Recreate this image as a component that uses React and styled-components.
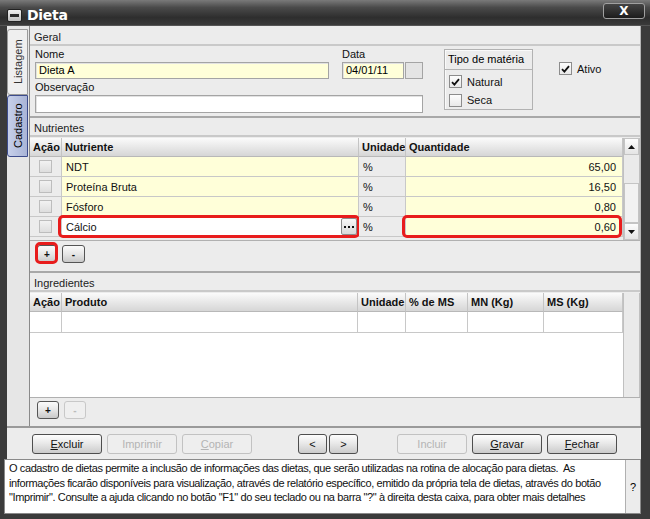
import React from "react";
import styled, { createGlobalStyle, css } from "styled-components";

const GlobalStyle = createGlobalStyle`
  html, body { margin: 0; padding: 0; background: #fff; }
  body { font-family: "Liberation Sans", Arial, sans-serif; font-size: 11px; color: #000; }
  * { box-sizing: border-box; }
`;

const Window = styled.div`
  width: 650px;
  height: 519px;
  background: #3b3b3b;
  display: flex;
  flex-direction: column;
  overflow: hidden;
`;

const TitleBar = styled.div`
  height: 26px;
  display: flex;
  align-items: center;
  padding: 5px 5px 0 7px;
  background: linear-gradient(#7a7a7a 0%, #4a4a4a 30%, #2e2e2e 70%, #3a3a3a 100%);
  border-bottom: 1px solid #555;
`;

const MinIcon = styled.div`
  width: 15px;
  height: 13px;
  border-radius: 2px;
  background: linear-gradient(#f0f0f0, #bdbdbd);
  border: 1px solid #222;
  display: flex;
  align-items: center;
  justify-content: center;
  &::after {
    content: "";
    width: 9px;
    height: 3px;
    background: #2a2a2a;
  }
`;

const Title = styled.div`
  margin-left: 5px;
  color: #fff;
  font-weight: bold;
  font-size: 14px;
  font-family: "DejaVu Sans", "Liberation Sans", sans-serif;
  letter-spacing: -0.3px;
  flex: 1;
`;

const CloseBtn = styled.div`
  align-self: flex-start;
  margin-top: -2px;
  width: 42px;
  height: 16px;
  border: 1px solid #a0a0a0;
  border-radius: 3px;
  background: linear-gradient(#444, #1c1c1c);
  color: #fff;
  font-weight: bold;
  font-size: 12px;
  font-family: "DejaVu Sans", sans-serif;
  display: flex;
  align-items: center;
  justify-content: center;
`;

const Body = styled.div`
  flex: 1;
  display: flex;
  flex-direction: column;
  padding: 0 9px 5px 4px;
`;

const Main = styled.div`
  height: 402px;
  display: flex;
  background: #ececec;
  margin-left: 3px;
  border-bottom: 2px solid #9a9a9a;
`;

const TabsCol = styled.div`
  width: 22px;
  display: flex;
  flex-direction: column;
  padding-top: 3px;
  background: #e6e6e6;
`;

const VTab = styled.div`
  writing-mode: vertical-rl;
  transform: rotate(180deg);
  height: ${(p) => p.$h}px;
  width: 21px;
  display: flex;
  align-items: center;
  justify-content: center;
  font-size: 11px;
  border: 1px solid #9a9a9a;
  border-radius: 0 3px 3px 0;
  ${(p) =>
    p.$active
      ? css`
          background: linear-gradient(to left, #c7d0ea, #a9b4d6);
          border-color: #3d4c8c;
        `
      : css`
          background: #efefef;
          color: #333;
        `}
`;

const Content = styled.div`
  flex: 1;
  display: flex;
  flex-direction: column;
  border-left: 1px solid #8a8a8a;
  border-right: 1px solid #b5b5b5;
  padding-top: 1px;
`;

const Section = styled.div`
  display: flex;
  flex-direction: column;
  height: ${(p) => p.$h}px;
  border-bottom: ${(p) => (p.$last ? "none" : "2px solid #a8a8a8")};
`;

const SectionHead = styled.div`
  height: 19px;
  line-height: 20px;
  padding-left: 4px;
  font-size: 11px;
  color: #222;
  border-bottom: 2px solid #c9c9c9;
`;

const GeralBody = styled.div`
  display: flex;
  align-items: flex-start;
  padding: 2px 5px 0;
`;

const LeftCol = styled.div`
  width: 388px;
  display: flex;
  flex-direction: column;
`;

const TopRow = styled.div`
  display: flex;
  justify-content: space-between;
`;

const Field = styled.div`
  display: flex;
  flex-direction: column;
  width: ${(p) => p.$w}px;
  margin-top: ${(p) => p.$mt || 0}px;
`;

const Label = styled.div`
  height: 13px;
  line-height: 13px;
  font-size: 11px;
  color: #111;
  margin-bottom: 1px;
`;

const Input = styled.div`
  height: ${(p) => p.$h || 17}px;
  width: ${(p) => (p.$w ? p.$w + "px" : "100%")};
  background: ${(p) => (p.$yellow ? "#ffffd9" : "#fff")};
  border: 1px solid #a4a4a4;
  box-shadow: inset 1px 1px 0 #e2e2e2;
  padding: 0 3px;
  line-height: 15px;
  font-size: 11px;
`;

const DateRow = styled.div`
  display: flex;
  gap: 1px;
`;

const DateBtn = styled.div`
  width: 18px;
  height: 17px;
  border: 1px solid #a4a4a4;
  background: #e4e4e4;
`;

const TipoGroup = styled.div`
  margin-left: 21px;
  margin-top: 1px;
  width: 89px;
  height: 61px;
  border: 1px solid #b2b2b2;
  box-shadow: inset 1px 1px 0 #fafafa;
  display: flex;
  flex-direction: column;
`;

const TipoHead = styled.div`
  height: 20px;
  line-height: 19px;
  padding-left: 3px;
  font-size: 11px;
  border-bottom: 1px solid #b2b2b2;
`;

const CheckRow = styled.label`
  display: flex;
  align-items: center;
  gap: 5px;
  height: ${(p) => p.$h || 17}px;
  padding-left: ${(p) => p.$pl || 0}px;
  margin-top: ${(p) => p.$mt || 0}px;
  font-size: 11px;
  color: #111;
`;

const Box = styled.span`
  width: 13px;
  height: 13px;
  flex: none;
  border: 1px solid ${(p) => (p.$light ? "#bdbdbd" : "#8c8c8c")};
  background: ${(p) => (p.$light ? "linear-gradient(#f2f2f2, #dedede)" : "linear-gradient(#fdfdfd, #e9e9e9)")};
  display: flex;
  align-items: center;
  justify-content: center;
`;

const Check = () => (
  <svg width="9" height="8" viewBox="0 0 9 8">
    <path d="M1 4.2 L3.4 6.6 L8 1.2" fill="none" stroke="#111" strokeWidth="1.8" />
  </svg>
);

const Ativo = styled(CheckRow)`
  margin-left: 26px;
  margin-top: 12px;
`;

const TableWrap = styled.div`
  display: flex;
  margin-top: 1px;
  height: ${(p) => p.$h}px;
  border-bottom: 1px solid #b0b0b0;
`;

const Grid = styled.div`
  flex: 1;
  display: grid;
  grid-template-columns: ${(p) => p.$cols};
  grid-auto-rows: ${(p) => p.$row}px;
  grid-template-rows: 19px;
  align-content: start;
  background: ${(p) => p.$bg || "transparent"};
`;

const Th = styled.div`
  background: linear-gradient(#fbfbfb 0%, #eaeaea 45%, #d6d6d6 100%);
  border-right: 1px solid #c4c4c4;
  border-bottom: 1px solid #b8b8b8;
  font-weight: bold;
  font-size: 11px;
  color: #111;
  padding-left: 3px;
  line-height: 18px;
  white-space: nowrap;
  overflow: hidden;
`;

const Td = styled.div`
  position: relative;
  background: ${(p) => (p.$yellow ? "#ffffd9" : p.$gray ? "#ececec" : "#fff")};
  border-right: 1px solid #c8c8c8;
  border-bottom: 1px solid #c8c8c8;
  display: flex;
  align-items: center;
  justify-content: ${(p) => (p.$center ? "center" : p.$right ? "flex-end" : "flex-start")};
  padding: 0 ${(p) => (p.$right ? 6 : 4)}px 0 4px;
  font-size: 11px;
  color: #111;
`;

const Highlight = styled.div`
  position: absolute;
  top: -2px;
  bottom: -2px;
  left: ${(p) => p.$l}px;
  right: ${(p) => p.$r}px;
  border: 3px solid #e81c1c;
  border-radius: 5px;
  pointer-events: none;
`;

const DotsBtn = styled.div`
  position: absolute;
  right: 1px;
  top: 1px;
  width: 16px;
  height: 17px;
  border: 1px solid #8c8c8c;
  border-radius: 2px;
  background: linear-gradient(#f8f8f8, #d8d8d8);
  display: flex;
  align-items: center;
  justify-content: center;
`;

const Dots = () => (
  <svg width="10" height="2" viewBox="0 0 10 2">
    <rect x="0" y="0" width="2" height="2" fill="#111" />
    <rect x="4" y="0" width="2" height="2" fill="#111" />
    <rect x="8" y="0" width="2" height="2" fill="#111" />
  </svg>
);

const ScrollBar = styled.div`
  width: 17px;
  display: flex;
  flex-direction: column;
  background: #eaeaea;
  border-left: 1px solid #c0c0c0;
  border-right: 1px solid #c0c0c0;
`;

const ScrollBtn = styled.div`
  height: 17px;
  border: 1px solid #c4c4c4;
  background: linear-gradient(#fdfdfd, #e4e4e4);
  display: flex;
  align-items: center;
  justify-content: center;
`;

const Thumb = styled.div`
  margin-top: ${(p) => p.$top}px;
  flex: 1;
  border: 1px solid #c4c4c4;
  background: #f2f2f2;
`;

const Arrow = ({ up }) => (
  <svg width="7" height="4" viewBox="0 0 7 4">
    <path d={up ? "M0 4 L3.5 0 L7 4 Z" : "M0 0 L3.5 4 L7 0 Z"} fill="#111" />
  </svg>
);

const SmallBtns = styled.div`
  display: flex;
  gap: 5px;
  padding: ${(p) => p.$pad};
`;

const BtnWrap = styled.div`
  position: relative;
`;

const SmallBtn = styled.div`
  width: ${(p) => p.$w}px;
  height: 18px;
  border: 1px solid ${(p) => (p.$disabled ? "#c8c8c8" : "#555")};
  border-radius: 3px;
  background: ${(p) =>
    p.$disabled ? "#efefef" : "linear-gradient(#fbfbfb 0%, #e6e6e6 50%, #c9c9c9 100%)"};
  color: ${(p) => (p.$disabled ? "#bbb" : "#111")};
  font-weight: bold;
  font-size: 10px;
  display: flex;
  align-items: center;
  justify-content: center;
`;

const BtnHighlight = styled(Highlight)`
  top: -3px;
  bottom: -1px;
  left: -2px;
  right: -1px;
`;

const ButtonBar = styled.div`
  height: 31px;
  background: #ececec;
  margin-left: 3px;
  display: flex;
  align-items: center;
  padding: 0 0 0 25px;
`;

const Btn = styled.div`
  width: ${(p) => p.$w || 70}px;
  height: 20px;
  margin-left: ${(p) => p.$ml || 0}px;
  border: 1px solid ${(p) => (p.$disabled ? "#c2c2c2" : "#4e4e4e")};
  border-radius: 3px;
  background: ${(p) =>
    p.$disabled ? "#eeeeee" : "linear-gradient(#fdfdfd 0%, #e9e9e9 45%, #cbcbcb 100%)"};
  color: ${(p) => (p.$disabled ? "#b4b4b4" : "#111")};
  font-size: 11px;
  display: flex;
  align-items: center;
  justify-content: center;
  u { text-decoration: underline; }
`;

const HelpRow = styled.div`
  height: 55px;
  display: flex;
  border: 1px solid #8a8a8a;
`;

const HelpText = styled.div`
  flex: 1;
  background: #fff;
  padding: 1px 1px 1px 4px;
  font-size: 11px;
  letter-spacing: -0.4px;
  line-height: 14.5px;
  color: #111;
`;

const HelpQ = styled.div`
  width: 15px;
  background: #ececec;
  border-left: 1px solid #b0b0b0;
  display: flex;
  align-items: center;
  justify-content: center;
  font-size: 11px;
`;

const nutrientes = [
  { nome: "NDT", qtd: "65,00" },
  { nome: "Proteína Bruta", qtd: "16,50" },
  { nome: "Fósforo", qtd: "0,80" },
  { nome: "Cálcio", qtd: "0,60", edit: true },
];

export default function App() {
  return (
    <>
      <GlobalStyle />
      <Window>
        <TitleBar>
          <MinIcon />
          <Title>Dieta</Title>
          <CloseBtn>X</CloseBtn>
        </TitleBar>
        <Body>
          <Main>
            <TabsCol>
              <VTab $h={66}>Listagem</VTab>
              <VTab $h={62} $active>Cadastro</VTab>
            </TabsCol>
            <Content>
              <Section $h={91}>
                <SectionHead>Geral</SectionHead>
                <GeralBody>
                  <LeftCol>
                    <TopRow>
                      <Field $w={294}>
                        <Label>Nome</Label>
                        <Input $yellow>Dieta A</Input>
                      </Field>
                      <Field $w={81}>
                        <Label>Data</Label>
                        <DateRow>
                          <Input $yellow $w={62}>04/01/11</Input>
                          <DateBtn />
                        </DateRow>
                      </Field>
                    </TopRow>
                    <Field $w={388} $mt={2}>
                      <Label>Observação</Label>
                      <Input $h={18} />
                    </Field>
                  </LeftCol>
                  <TipoGroup>
                    <TipoHead>Tipo de matéria</TipoHead>
                    <CheckRow $pl={4} $h={19} $mt={2}>
                      <Box><Check /></Box>Natural
                    </CheckRow>
                    <CheckRow $pl={4} $h={18}>
                      <Box />Seca
                    </CheckRow>
                  </TipoGroup>
                  <Ativo>
                    <Box><Check /></Box>Ativo
                  </Ativo>
                </GeralBody>
              </Section>

              <Section $h={155}>
                <SectionHead>Nutrientes</SectionHead>
                <TableWrap $h={103}>
                  <Grid $cols="32px 297px 47px 1fr" $row={20}>
                    <Th>Ação</Th>
                    <Th>Nutriente</Th>
                    <Th>Unidade</Th>
                    <Th>Quantidade</Th>
                    {nutrientes.map((n) => (
                      <React.Fragment key={n.nome}>
                        <Td $gray $center>
                          <Box $light />
                        </Td>
                        <Td $yellow={!n.edit}>
                          {n.nome}
                          {n.edit && (
                            <>
                              <DotsBtn><Dots /></DotsBtn>
                              <Highlight $l={-4} $r={-2} />
                            </>
                          )}
                        </Td>
                        <Td $gray>%</Td>
                        <Td $yellow $right>
                          {n.qtd}
                          {n.edit && <Highlight $l={-4} $r={0} />}
                        </Td>
                      </React.Fragment>
                    ))}
                  </Grid>
                  <ScrollBar>
                    <ScrollBtn><Arrow up /></ScrollBtn>
                    <Thumb $top={28} />
                    <ScrollBtn><Arrow /></ScrollBtn>
                  </ScrollBar>
                </TableWrap>
                <SmallBtns $pad="4px 0 0 7px">
                  <BtnWrap>
                    <SmallBtn $w={20}>+</SmallBtn>
                    <BtnHighlight />
                  </BtnWrap>
                  <SmallBtn $w={23}>-</SmallBtn>
                </SmallBtns>
              </Section>

              <Section $h={153} $last>
                <SectionHead>Ingredientes</SectionHead>
                <TableWrap $h={105}>
                  <Grid $cols="32px 296px 48px 62px 76px 1fr" $row={21} $bg="#fff">
                    <Th>Ação</Th>
                    <Th>Produto</Th>
                    <Th>Unidade</Th>
                    <Th>% de MS</Th>
                    <Th>MN (Kg)</Th>
                    <Th>MS (Kg)</Th>
                    <Td />
                    <Td />
                    <Td />
                    <Td />
                    <Td />
                    <Td />
                  </Grid>
                  <ScrollBar />
                </TableWrap>
                <SmallBtns $pad="3px 0 0 7px">
                  <SmallBtn $w={22}>+</SmallBtn>
                  <SmallBtn $w={22} $disabled>-</SmallBtn>
                </SmallBtns>
              </Section>
            </Content>
          </Main>

          <ButtonBar>
            <Btn><u>E</u>xcluir</Btn>
            <Btn $ml={5} $disabled>Imprimir</Btn>
            <Btn $ml={5} $disabled><u>C</u>opiar</Btn>
            <Btn $ml={46} $w={29}>&lt;</Btn>
            <Btn $ml={2} $w={29}>&gt;</Btn>
            <Btn $ml={39} $disabled>Incluir</Btn>
            <Btn $ml={5}><u>G</u>ravar</Btn>
            <Btn $ml={5}><u>F</u>echar</Btn>
          </ButtonBar>

          <HelpRow>
            <HelpText>
              O cadastro de dietas permite a inclusão de informações das dietas, que serão utilizadas na rotina de alocação para dietas.&nbsp; As informações ficarão disponíveis para visualização, através de relatório específico, emitido da própria tela de dietas, através do botão "Imprimir". Consulte a ajuda clicando no botão "F1" do seu teclado ou na barra "?" à direita desta caixa, para obter mais detalhes
            </HelpText>
            <HelpQ>?</HelpQ>
          </HelpRow>
        </Body>
      </Window>
    </>
  );
}
